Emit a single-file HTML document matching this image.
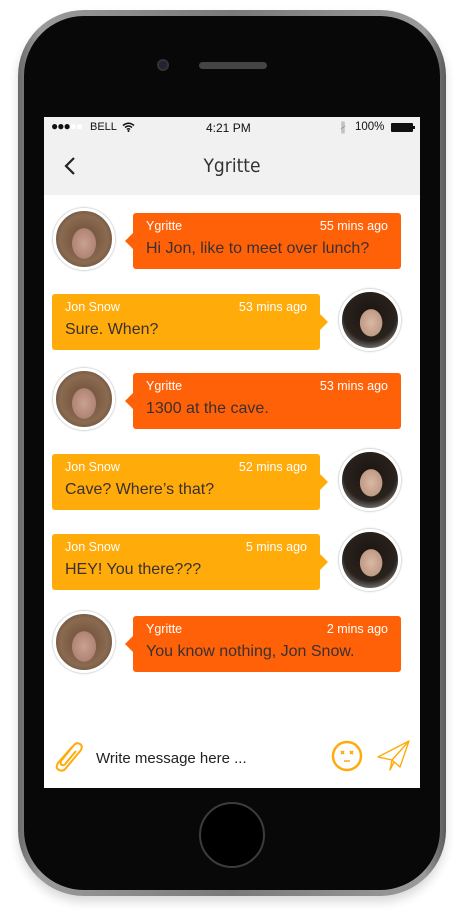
<!DOCTYPE html>
<html><head><meta charset="utf-8"><style>
*{margin:0;padding:0;box-sizing:border-box}
body{width:463px;height:913px;background:#fff;position:relative;overflow:hidden;font-family:"Liberation Sans",sans-serif}
.phone{position:absolute;left:18px;top:10px;width:428px;height:886px;border-radius:66px;background:linear-gradient(90deg,#6a6a6a,#9a9a9a 5%,#7a7a7a 50%,#9a9a9a 95%,#5a5a5a);box-shadow:0 6px 10px rgba(0,0,0,.15)}
.inner{position:absolute;left:6px;top:6px;right:6px;bottom:6px;border-radius:60px;background:#080808}
.cam{position:absolute;left:157px;top:59px;width:12px;height:12px;border-radius:50%;background:#223;border:2px solid #333}
.spk{position:absolute;left:199px;top:62px;width:68px;height:7px;border-radius:4px;background:#444}
.home{position:absolute;left:199px;top:802px;width:66px;height:66px;border-radius:50%;border:2px solid #3a3c40;background:#000}
.screen{position:absolute;left:44px;top:117px;width:376px;height:671px;background:#fff;overflow:hidden}
.status{height:20px;background:#f1f1f1;font-size:12px;color:#111;position:relative}
.header{height:58px;background:#f1f1f1;position:relative;text-align:center;font-size:19px;color:#333;line-height:58px;font-family:"DejaVu Sans Condensed","Liberation Sans",sans-serif}
.b{position:absolute;width:268px;height:56px;border-radius:3px;color:#fff}
.b .n{position:absolute;left:13px;top:6px;font-size:12.5px}
.b .t{position:absolute;right:13px;top:6px;font-size:12.5px}
.b .m{position:absolute;left:13px;top:27px;font-size:16px;color:#3a3030}
.o{background:#ff6108;left:89px}
.y{background:#ffab0a;left:8px}
.o:before{content:"";position:absolute;left:-8px;top:20px;border:8px solid transparent;border-left:0;border-right-color:#ff6108}
.y:after{content:"";position:absolute;right:-8px;top:20px;border:8px solid transparent;border-right:0;border-left-color:#ffab0a}
.av{position:absolute;width:62px;height:62px;border-radius:50%;border:3px solid #fff;box-shadow:0 0 2px rgba(0,0,0,.4)}
.yg{left:9px;background:radial-gradient(ellipse 30% 38% at 50% 58%,#c9a291 0,#b08474 70%,transparent 73%),radial-gradient(circle at 50% 50%,#6b4a35,#8a6a50 60%,#4b3a30)}
.js{left:295px;background:radial-gradient(ellipse 28% 34% at 52% 55%,#d9b9a5 0,#c09a85 70%,transparent 73%),radial-gradient(circle at 50% 40%,#1a1410,#2a221d 60%,#ccc 100%)}
</style></head><body>
<div class="phone"><div class="inner"></div></div>
<div class="cam"></div><div class="spk"></div><div class="home"></div>
<div class="screen">
 <div class="status">
  <span style="position:absolute;left:7px;top:2px;letter-spacing:-1px">●●●<span style="color:#fff">●●</span></span>
  <span style="position:absolute;left:46px;top:4px;font-size:11px">BELL</span>
  <svg style="position:absolute;left:78px;top:5px" width="13" height="10" viewBox="0 0 13 10"><path d="M1 3.5Q6.5-1 12 3.5M3 5.5Q6.5 2.5 10 5.5M5 7.5Q6.5 6 8 7.5" stroke="#111" stroke-width="1.5" fill="none"/><circle cx="6.5" cy="9" r="1" fill="#111"/></svg>
  <span style="position:absolute;left:162px;top:4px;font-size:12px">4:21 PM</span>
  <span style="position:absolute;left:296px;top:3px;color:#999">∦</span>
  <span style="position:absolute;left:311px;top:4px;font-size:11.5px">100%</span>
  <div style="position:absolute;left:347px;top:6px;width:22px;height:9px;background:#111;border-radius:1px"></div>
  <div style="position:absolute;left:369px;top:9px;width:2px;height:3px;background:#111"></div>
 </div>
 <div class="header">Ygritte
  <svg style="position:absolute;left:20px;top:20px" width="12" height="18" viewBox="0 0 12 18"><path d="M10 1L2 9L10 17" stroke="#222" stroke-width="2.2" fill="none"/></svg>
 </div>
 <div class="av yg" style="top:91px"></div>
 <div class="b o" style="top:96px"><span class="n">Ygritte</span><span class="t">55 mins ago</span><span class="m">Hi Jon, like to meet over lunch?</span></div>
 <div class="b y" style="top:177px"><span class="n">Jon Snow</span><span class="t">53 mins ago</span><span class="m">Sure. When?</span></div>
 <div class="av js" style="top:172px"></div>
 <div class="av yg" style="top:251px"></div>
 <div class="b o" style="top:256px"><span class="n">Ygritte</span><span class="t">53 mins ago</span><span class="m">1300 at the cave.</span></div>
 <div class="b y" style="top:337px"><span class="n">Jon Snow</span><span class="t">52 mins ago</span><span class="m">Cave? Where’s that?</span></div>
 <div class="av js" style="top:332px"></div>
 <div class="b y" style="top:417px"><span class="n">Jon Snow</span><span class="t">5 mins ago</span><span class="m">HEY! You there???</span></div>
 <div class="av js" style="top:412px"></div>
 <div class="av yg" style="top:494px"></div>
 <div class="b o" style="top:499px"><span class="n">Ygritte</span><span class="t">2 mins ago</span><span class="m">You know nothing, Jon Snow.</span></div>
 <svg style="position:absolute;left:8px;top:622px" width="34" height="34" viewBox="0 0 34 34"><path d="M20 8L6 24Q3 29 7 31Q11 33 14 29L29 11Q31 7 28 5Q25 3 22 6L9 22Q8 25 10 26Q12 27 14 24L24 12" stroke="#ffab0a" stroke-width="2" fill="none"/></svg>
 <span style="position:absolute;left:52px;top:633px;font-size:15px;color:#222">Write message here ...</span>
 <svg style="position:absolute;left:286px;top:622px" width="34" height="34" viewBox="0 0 34 34"><circle cx="17" cy="17" r="14" stroke="#ffab0a" stroke-width="2.5" fill="none"/><path d="M11 12l3 3M14 12l-3 3M20 12l3 3M23 12l-3 3M14 22h6" stroke="#ffab0a" stroke-width="1.6"/></svg>
 <svg style="position:absolute;left:332px;top:622px" width="36" height="34" viewBox="0 0 36 34"><path d="M2 18L33 2L24 28L16 21ZM33 2L16 21L14 31L18 23" stroke="#ffab0a" stroke-width="1.4" fill="none" stroke-linejoin="round"/></svg>
</div>
</body></html>
